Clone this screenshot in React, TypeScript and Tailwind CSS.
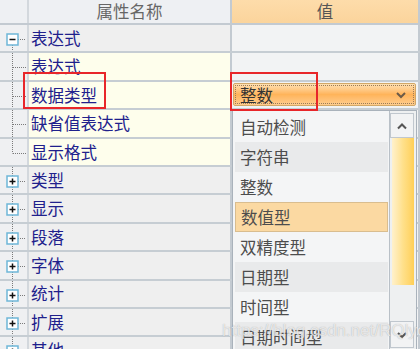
import React from "react";

type Kind = "rootFirst" | "child" | "childLast" | "root";

const rows: { name: string; kind: Kind }[] = [
  { name: "表达式", kind: "rootFirst" },
  { name: "表达式", kind: "child" },
  { name: "数据类型", kind: "child" },
  { name: "缺省值表达式", kind: "child" },
  { name: "显示格式", kind: "childLast" },
  { name: "类型", kind: "root" },
  { name: "显示", kind: "root" },
  { name: "段落", kind: "root" },
  { name: "字体", kind: "root" },
  { name: "统计", kind: "root" },
  { name: "扩展", kind: "root" },
  { name: "其他", kind: "root" },
];

const options = ["自动检测", "字符串", "整数", "数值型", "双精度型", "日期型", "时间型", "日期时间型"];

const TreeCell = ({ kind }: { kind: Kind }) => {
  const dot = { stroke: "#7a7a7a", strokeWidth: 1, strokeDasharray: "1 1" };
  const isRoot = kind === "rootFirst" || kind === "root";
  return (
    <svg width="27" height="29" className="block">
      {kind === "rootFirst" && <line x1="12.5" y1="20" x2="12.5" y2="29" {...dot} />}
      {kind === "root" && <line x1="12.5" y1="0" x2="12.5" y2="29" {...dot} />}
      {kind === "child" && <line x1="12.5" y1="0" x2="12.5" y2="29" {...dot} />}
      {kind === "childLast" && <line x1="12.5" y1="0" x2="12.5" y2="14.5" {...dot} />}
      {isRoot ? (
        <>
          <line x1="18" y1="14.5" x2="25" y2="14.5" {...dot} />
          <rect x="7" y="9" width="11" height="11" fill="#ffffff" stroke="#6fb6d8" strokeWidth="1.5" />
          <line x1="9.5" y1="14.5" x2="15.5" y2="14.5" stroke="#111" strokeWidth="1.5" />
          {kind === "root" && <line x1="12.5" y1="11.5" x2="12.5" y2="17.5" stroke="#111" strokeWidth="1.5" />}
        </>
      ) : (
        <line x1="13" y1="14.5" x2="27" y2="14.5" {...dot} />
      )}
    </svg>
  );
};

const Chevron = ({ up = false, color = "#555" }: { up?: boolean; color?: string }) => (
  <svg width="12" height="8" viewBox="0 0 12 8">
    <path d={up ? "M2 6.5 L6 2.5 L10 6.5" : "M2 2 L6 6 L10 2"} fill="none" stroke={color} strokeWidth="2" />
  </svg>
);

export default function App() {
  return (
    <div className="relative w-[420px] h-[349px] overflow-hidden bg-[#eef0f2] font-['Noto_Sans_CJK_SC','Microsoft_YaHei',sans-serif] text-[16.5px] leading-none">
      {/* header */}
      <div className="flex h-[25px] border-b-2 border-[#c3cad1]">
        <div className="w-[29px] border-r-2 border-[#d3d8dd] bg-[#eef0f3]" />
        <div className="w-[203px] border-r-2 border-[#c3cad1] bg-[#eef0f3] flex items-center justify-center text-[#666]">
          属性名称
        </div>
        <div className="w-[188px] border-r-2 border-[#c3cad1] bg-gradient-to-b from-[#fddcaa] to-[#fbd49c] flex items-center justify-center text-[#555]">
          值
        </div>
      </div>

      {rows.map((r, i) => {
        const child = r.kind === "child" || r.kind === "childLast";
        return (
          <div key={i} className="flex h-[28.4px] border-b-2 border-[#c6cdd3]">
            <div className="w-[29px] border-r-2 border-[#d3d8dd] bg-[#eff0f2] overflow-hidden">
              <TreeCell kind={r.kind} />
            </div>
            <div
              className={`w-[203px] border-r-2 border-[#c3cad1] flex items-center pl-[2px] text-[#20208c] ${
                child ? "bg-[#fefeec]" : "bg-[#efefef]"
              }`}
            >
              {r.name}
            </div>
            <div className="w-[188px] border-r-2 border-[#c3cad1] bg-[#f2f3f4] flex items-center">
              {i === 2 && (
                <div className="ml-[1px] mr-[2px] flex h-[23px] flex-1 items-center justify-between rounded-[2px] border border-[#d2a868] bg-gradient-to-b from-[#ffe1b2] via-[#ffb45a] to-[#ffcd8e] px-[1px]">
                  <div className="flex h-[19px] flex-1 items-center justify-between border border-dotted border-[#9a7b58] pl-[4px] pr-[6px] text-[#333]">
                    <span>整数</span>
                    <Chevron color="#6b5a48" />
                  </div>
                </div>
              )}
            </div>
          </div>
        );
      })}

      {/* dropdown list */}
      <div className="absolute left-[232px] top-[110px] flex h-[260px] w-[185px] border border-[#a9b2bb] bg-[#f4f5f6]">
        <div className="flex-1 pt-[1px] pl-[2px] pr-[1px]">
          {options.map((o, i) => (
            <div
              key={o}
              className={`flex h-[30px] items-center pl-[5px] text-[#4d4d4d] ${
                o === "数值型"
                  ? "border border-[#d9bd8f] bg-[#fbd9a2]"
                  : i % 2 === 1
                  ? "bg-[#e9eaeb]"
                  : ""
              }`}
            >
              {o}
            </div>
          ))}
        </div>
        <div className="flex w-[27px] flex-col border-l border-[#b9c0c7] bg-[#eef0f1] pr-[2px]">
          <div className="mt-[2px] flex h-[25px] items-center justify-center border border-[#c0c7ce] bg-[#f2f3f4]">
            <Chevron up color="#555" />
          </div>
          <div className="ml-[2px] h-[147px] bg-gradient-to-r from-[#fff1cc] via-[#ffe08a] to-[#ffcf55]" />
          <div className="h-[36px]" />
          <div className="flex h-[27px] items-start justify-center border border-[#c0c7ce] bg-[#f2f3f4] pt-[9px]">
            <Chevron color="#555" />
          </div>
        </div>
      </div>

      {/* annotation boxes */}
      <div className="absolute left-[23px] top-[72px] h-[37px] w-[83px] border-2 border-[#e8262a]" />
      <div className="absolute left-[230px] top-[72px] h-[39px] w-[88px] border-2 border-[#e8262a]" />

      {/* watermark */}
      <div className="absolute left-[222px] top-[322px] font-['Liberation_Sans',sans-serif] text-[17px] text-white/70 [text-shadow:0_0_1px_rgba(120,120,120,0.6)]">
        https://blog.csdn.net/RQlyc
      </div>
    </div>
  );
}
